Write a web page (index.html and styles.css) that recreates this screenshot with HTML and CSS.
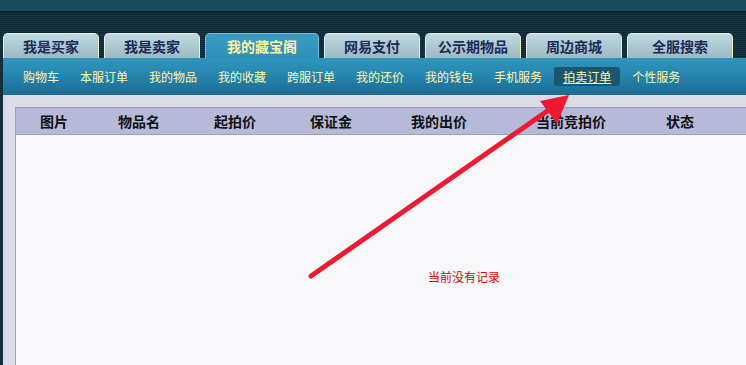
FILE: index.html
```html
<!DOCTYPE html>
<html lang="zh">
<head>
<meta charset="utf-8">
<title>我的藏宝阁 - 拍卖订单</title>
<link rel="stylesheet" href="styles.css">
</head>
<body>
<div class="page">
  <div class="topband"></div>
  <div class="tabs">
    <a class="tab w96">我是买家</a>
    <a class="tab w96">我是卖家</a>
    <a class="tab tab-active w114">我的藏宝阁</a>
    <a class="tab w96">网易支付</a>
    <a class="tab w96">公示期物品</a>
    <a class="tab w96">周边商城</a>
    <a class="tab w106">全服搜索</a>
  </div>
  <div class="main">
    <nav class="subnav">
      <a class="sub">购物车</a>
      <a class="sub">本服订单</a>
      <a class="sub">我的物品</a>
      <a class="sub">我的收藏</a>
      <a class="sub">跨服订单</a>
      <a class="sub">我的还价</a>
      <a class="sub">我的钱包</a>
      <a class="sub">手机服务</a>
      <a class="sub sub-active">拍卖订单</a>
      <a class="sub">个性服务</a>
    </nav>
    <div class="content">
      <div class="table">
        <div class="thead">
          <div class="th c1">图片</div>
          <div class="th c2">物品名</div>
          <div class="th c3">起拍价</div>
          <div class="th c4">保证金</div>
          <div class="th c5">我的出价</div>
          <div class="th c6">当前竞拍价</div>
          <div class="th c7">状态</div>
        </div>
        <div class="tbody">
          <p class="empty">当前没有记录</p>
        </div>
      </div>
    </div>
  </div>
  <svg class="arrow" width="746" height="365" viewBox="0 0 746 365" aria-hidden="true">
    <line x1="311" y1="276" x2="553" y2="107" stroke="#ee1a34" stroke-width="5" stroke-linecap="round"/>
    <polygon points="569,95 540,101 557,124" fill="#ee1a34"/>
  </svg>
</div>
</body>
</html>
```

FILE: styles.css
```css
* { box-sizing: border-box; }
html, body { margin: 0; padding: 0; }
body {
  width: 746px;
  height: 365px;
  overflow: hidden;
  font-family: "Noto Sans CJK SC", "Noto Sans", sans-serif;
  background: #0f2a34;
}
.page {
  position: relative;
  width: 746px;
  height: 365px;
  overflow: hidden;
  background: repeating-linear-gradient(to bottom, #0e2630 0, #0e2630 1px, #18384a 1px, #18384a 2px);
}
.topband {
  height: 33px;
  background:
    linear-gradient(to bottom, #1a4b5c 0, #1a4b5c 11px, #0b1f28 11px, #0b1f28 12px, transparent 12px);
}
.tabs {
  display: flex;
  gap: 5px;
  height: 25px;
  padding-left: 3px;
}
.tab {
  display: flex;
  align-items: center;
  justify-content: center;
  height: 25px;
  border-radius: 5px 5px 0 0;
  background: linear-gradient(to bottom, #bed8e0, #9bbac4);
  border: 1px solid #e4f0ec;
  border-right-color: #f4f0bc;
  border-bottom: none;
  color: #1c2a56;
  font-size: 14px;
  font-weight: bold;
}
.tab-active {
  background: linear-gradient(to bottom, #3a9cc4, #2f90ba);
  border-color: #72bcdc;
  color: #fff4a0;
}
.w96 { width: 96px; }
.w106 { width: 106px; }
.w114 { width: 114px; }
.main {
  padding-left: 3px;
}
.subnav {
  display: flex;
  align-items: center;
  gap: 3px;
  height: 37px;
  padding-left: 11px;
  background: linear-gradient(to bottom, #2e96be, #2584ac 50%, #1c6a90);
}
.sub {
  display: block;
  padding: 0 9px;
  height: 19px;
  line-height: 19px;
  font-size: 12px;
  color: #fff6b0;
}
.sub-active {
  background: #1b5670;
  border-radius: 3px;
  text-decoration: underline;
}
.content {
  background: #dcdce8;
  height: 270px;
  padding: 12px 0 0 12px;
}
.table {
  width: 898px;
  height: 300px;
  border: 1px solid #9a9ec2;
  background: #f8f8fa;
}
.thead {
  display: flex;
  height: 27px;
  background: #b6bad8;
  border-bottom: 1px solid #9a9ec2;
}
.th {
  display: flex;
  align-items: center;
  justify-content: center;
  font-size: 14px;
  font-weight: bold;
  color: #111;
}
.c1 { width: 76px; }
.c2 { width: 94px; }
.c3 { width: 98px; }
.c4 { width: 94px; }
.c5 { width: 122px; }
.c6 { width: 142px; }
.c7 { width: 76px; }
.tbody {
  padding-top: 134px;
}
.empty {
  margin: 0;
  width: 896px;
  text-align: center;
  font-size: 12px;
  line-height: 16px;
  color: #e00000;
}
.arrow {
  position: absolute;
  left: 0;
  top: 0;
  pointer-events: none;
}
```
